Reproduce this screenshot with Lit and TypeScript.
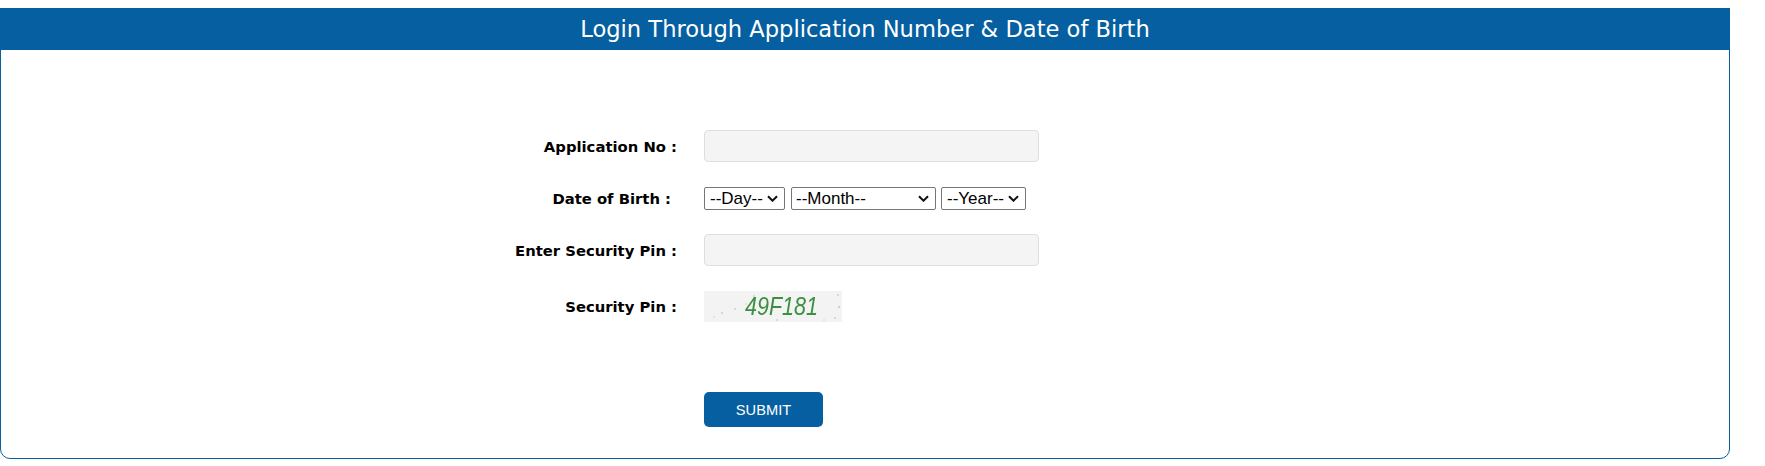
import { LitElement, html, css, svg } from "lit";
import { customElement } from "lit/decorators.js";

const dots: [number, number, number][] = [
  [18, 22, 1.1], [31, 18, 1], [50, 5, 0.9], [48, 22, 0.9], [73, 29, 1],
  [134, 4, 1], [135, 16, 1.2], [131, 27, 1], [10, 26, 0.8], [120, 29, 0.8], [42, 13, 0.8],
];

const chevron =
  "url(\"data:image/svg+xml,%3Csvg xmlns='http://www.w3.org/2000/svg' width='11' height='7' viewBox='0 0 11 7'%3E%3Cpath d='M1 1.2l4.5 4.5L10 1.2' fill='none' stroke='%23111' stroke-width='2'/%3E%3C/svg%3E\")";

@customElement("app-root")
export class AppRoot extends LitElement {
  static styles = css`
    :host {
      display: block;
      padding-top: 8px;
      width: 1730px;
      font-family: "DejaVu Sans", Verdana, sans-serif;
    }
    .panel {
      height: 451px;
      box-sizing: border-box;
      border: 1px solid #055fa0;
      border-radius: 0 0 10px 10px;
      background: #fff;
    }
    .title {
      margin: -1px -1px 0;
      height: 42px;
      background: #055fa0;
      color: #fff;
      font-size: 22.6px;
      line-height: 42px;
      text-align: center;
      font-weight: 400;
    }
    .form {
      display: grid;
      grid-template-columns: 677px 1fr;
      column-gap: 27px;
      padding-top: 70px;
      margin-left: -1px;
      align-items: center;
    }
    label {
      font-size: 14.8px;
      font-weight: 700;
      color: #000;
      text-align: right;
    }
    label.dob {
      padding-right: 6px;
    }
    .cell {
      display: flex;
      align-items: center;
      height: 52px;
    }
    .cell.captcha-cell {
      height: 60px;
    }
    .field {
      box-sizing: border-box;
      width: 335px;
      height: 32px;
      background: #f4f4f4;
      border: 1px solid #dedede;
      border-radius: 4px;
      padding: 0 8px;
    }
    .dates {
      gap: 6px;
    }
    select {
      box-sizing: border-box;
      height: 23px;
      padding: 0 0 0 5px;
      font-family: "Liberation Sans", Arial, sans-serif;
      font-size: 17px;
      color: #000;
      appearance: none;
      -webkit-appearance: none;
      border: 1px solid #767676;
      border-radius: 2px;
      background-color: #fff;
      background-repeat: no-repeat;
      background-position: right 6px center;
      background-image: var(--chevron);
    }
    .day { width: 81px; }
    .month { width: 145px; padding-left: 4px; }
    .year { width: 85px; margin-left: -1px; }
    .captcha {
      display: block;
      width: 138px;
      height: 31px;
    }
    .captcha text {
      font-family: "Liberation Sans", Arial, sans-serif;
      font-style: italic;
      font-size: 25px;
      fill: #3b8f42;
      filter: blur(0.3px);
    }
    .captcha circle {
      fill: #cdd0cd;
      filter: blur(0.5px);
    }
    .actions {
      padding-top: 56px;
    }
    button {
      display: block;
      width: 119px;
      height: 35px;
      border: 0;
      border-radius: 5px;
      background: #055fa0;
      color: #fff;
      font-family: "Liberation Sans", Arial, sans-serif;
      font-size: 14.67px;
      cursor: pointer;
    }
  `;

  render() {
    return html`
      <section class="panel" style="--chevron: ${chevron}">
        <h1 class="title">Login Through Application Number &amp; Date of Birth</h1>
        <form class="form" @submit=${(e: Event) => e.preventDefault()}>
          <label>Application No :</label>
          <div class="cell"><input class="field" type="text" /></div>

          <label class="dob">Date of Birth :</label>
          <div class="cell dates">
            <select class="day"><option>--Day--</option></select>
            <select class="month"><option>--Month--</option></select>
            <select class="year"><option>--Year--</option></select>
          </div>

          <label>Enter Security Pin :</label>
          <div class="cell"><input class="field" type="text" /></div>

          <label>Security Pin :</label>
          <div class="cell captcha-cell">
            <svg class="captcha" viewBox="0 0 138 31" role="img" aria-label="Security pin 49F181">
              <rect width="138" height="31" fill="#f3f3f3"></rect>
              ${dots.map(([x, y, r]) => svg`<circle cx=${x} cy=${y} r=${r}></circle>`)}
              <text x="41" y="24" textLength="73" lengthAdjust="spacingAndGlyphs">49F181</text>
            </svg>
          </div>

          <span></span>
          <div class="actions"><button type="submit">SUBMIT</button></div>
        </form>
      </section>
    `;
  }
}
